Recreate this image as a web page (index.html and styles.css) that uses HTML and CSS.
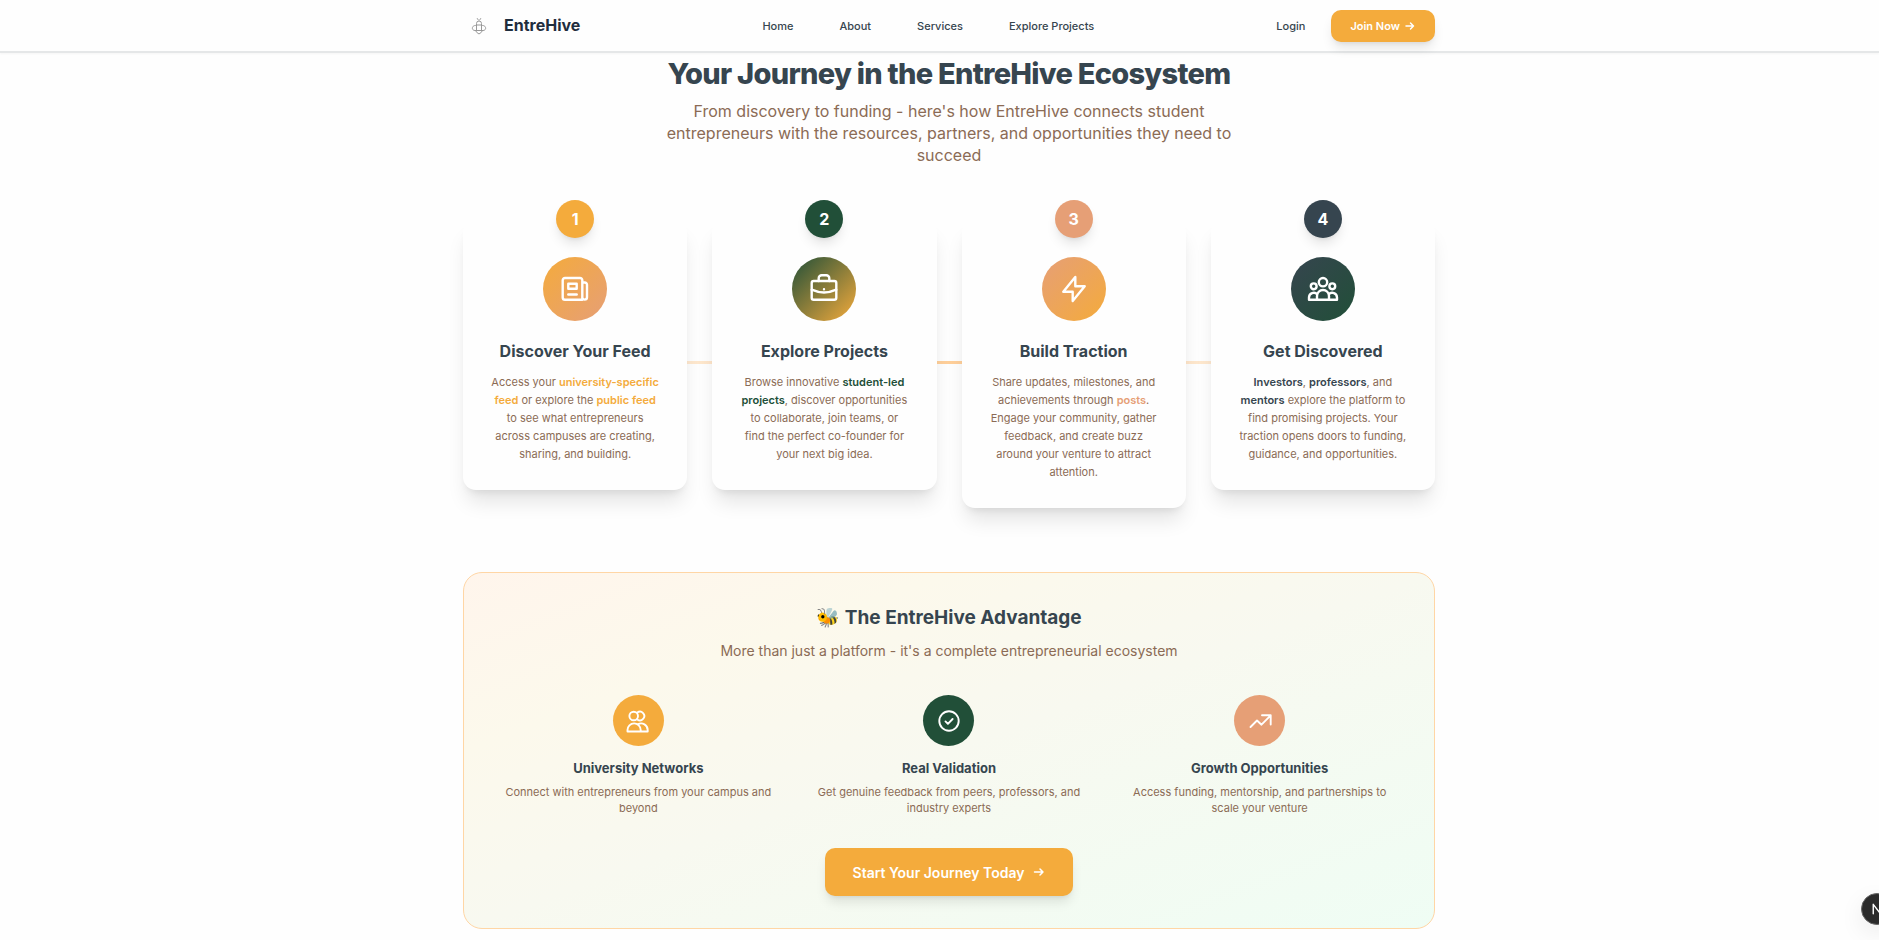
FILE: index.html
```html
<!DOCTYPE html>
<html lang="en">
<head>
    <meta charset="UTF-8">
    <meta name="viewport" content="width=device-width, initial-scale=1.0">
    <title>EntreHive</title>
    <link rel="stylesheet" href="styles.css">
</head>
<body>
    <header class="site-header">
        <div class="container header-inner">
            <a href="#" class="brand">
                <svg class="brand-logo" viewBox="0 0 32 32" aria-hidden="true">
                    <path d="M14.300 8.500l1 1.500M17.700 8.500l-1 1.500"/>
                    <path d="M13.500 20v-6.500a2.500 2.500 0 0 1 5 0V20M13.500 15h5"/>
                    <path d="M13.500 15.500c-5-1-5.500 5-1.500 5h8c4 0 3.500-6-1.500-5"/>
                    <path d="M12.500 20.500q.5 2 3.500 3.500 3-1.500 3.500-3.500"/>
                </svg>
                <span class="brand-name">EntreHive</span>
            </a>
            <nav class="main-nav">
                <a href="#">Home</a>
                <a href="#">About</a>
                <a href="#">Services</a>
                <a href="#">Explore Projects</a>
            </nav>
            <div class="header-actions">
                <a href="#" class="login">Login</a>
                <button type="button" class="btn btn-small">
                    Join Now
                    <svg class="arrow" viewBox="0 0 12 12" aria-hidden="true"><path d="M2 6h7.500M6.500 3l3 3-3 3"/></svg>
                </button>
            </div>
        </div>
    </header>

    <main class="page">
        <div class="container">
            <section class="intro">
                <h1>Your Journey in the EntreHive Ecosystem</h1>
                <p>From discovery to funding - here's how EntreHive connects student entrepreneurs with the resources, partners, and opportunities they need to succeed</p>
            </section>

            <section class="steps">
                <article class="step">
                    <span class="step-number honey">1</span>
                    <div class="step-icon honey-peach">
                        <svg viewBox="0 0 32 32" aria-hidden="true">
                            <path d="M23.300 26.700H6a2.300 2.300 0 0 1-2.300-2.300V7.300A2.300 2.300 0 0 1 6 5h15a2.300 2.300 0 0 1 2.300 2.300zM23.300 9.500h2.400A2.300 2.300 0 0 1 28 11.800v12.500a2.350 2.350 0 0 1-4.700 0"/>
                            <rect x="9.300" y="10.700" width="8.400" height="5"/>
                            <path d="M9.300 21.500h8.400"/>
                        </svg>
                    </div>
                    <h2>Discover Your Feed</h2>
                    <p>Access your <strong class="text-honey">university-specific feed</strong> or explore the <strong class="text-honey">public feed</strong> to see what entrepreneurs across campuses are creating, sharing, and building.</p>
                </article>
                <article class="step">
                    <span class="step-number forest">2</span>
                    <div class="step-icon forest-honey">
                        <svg viewBox="0 0 32 32" aria-hidden="true">
                            <rect x="3.700" y="8" width="24.600" height="18.700" rx="2"/>
                            <path d="M10.700 8V5.300a3 3 0 0 1 3-3h4.600a3 3 0 0 1 3 3V8M3.700 16.700q12.300 5.600 24.600 0M16 16.200v.1"/>
                        </svg>
                    </div>
                    <h2>Explore Projects</h2>
                    <p>Browse innovative <strong class="text-forest">student-led projects</strong>, discover opportunities to collaborate, join teams, or find the perfect co-founder for your next big idea.</p>
                </article>
                <article class="step">
                    <span class="step-number peach">3</span>
                    <div class="step-icon peach-honey">
                        <svg viewBox="0 0 32 32" aria-hidden="true">
                            <path d="M5.300 18.700L17.300 4v9.300h9.400L14.700 28v-9.300z"/>
                        </svg>
                    </div>
                    <h2>Build Traction</h2>
                    <p>Share updates, milestones, and achievements through <strong class="text-peach">posts</strong>. Engage your community, gather feedback, and create buzz around your venture to attract attention.</p>
                </article>
                <article class="step">
                    <span class="step-number slate">4</span>
                    <div class="step-icon slate-forest">
                        <svg viewBox="0 0 32 32" aria-hidden="true">
                            <circle cx="16" cy="9.200" r="4.200"/>
                            <circle cx="6.700" cy="13.300" r="2.900"/>
                            <circle cx="25.300" cy="13.300" r="2.900"/>
                            <path d="M10 26.800V23a6 6 0 0 1 12 0v3.800zM10 26.800H2V24.500a4.700 4.700 0 0 1 8.300-3M22 26.800h8V24.500a4.700 4.700 0 0 0-8.300-3"/>
                        </svg>
                    </div>
                    <h2>Get Discovered</h2>
                    <p><strong class="text-slate">Investors</strong>, <strong class="text-slate">professors</strong>, and <strong class="text-slate">mentors</strong> explore the platform to find promising projects. Your traction opens doors to funding, guidance, and opportunities.</p>
                </article>
            </section>

            <section class="advantage">
                <h2>🐝 The EntreHive Advantage</h2>
                <p class="advantage-lead">More than just a platform - it's a complete entrepreneurial ecosystem</p>
                <div class="benefits">
                    <div class="benefit">
                        <div class="benefit-icon honey">
                            <svg viewBox="0 0 26 26" aria-hidden="true">
                                <circle cx="8.700" cy="8" r="4.300"/>
                                <path d="M12.300 4.600a4.300 4.300 0 1 1 0 6.800M2.500 23.500V22a6.600 6.600 0 0 1 13.200 0v1.500zM15.700 23.500h7V22a6.600 6.600 0 0 0-9.700-5.800"/>
                            </svg>
                        </div>
                        <h3>University Networks</h3>
                        <p>Connect with entrepreneurs from your campus and beyond</p>
                    </div>
                    <div class="benefit">
                        <div class="benefit-icon forest">
                            <svg viewBox="0 0 26 26" aria-hidden="true">
                                <circle cx="13" cy="13" r="9.700"/>
                                <path d="M9.500 13.400l2.400 2.400 4.700-4.800"/>
                            </svg>
                        </div>
                        <h3>Real Validation</h3>
                        <p>Get genuine feedback from peers, professors, and industry experts</p>
                    </div>
                    <div class="benefit">
                        <div class="benefit-icon peach">
                            <svg viewBox="0 0 26 26" aria-hidden="true">
                                <path d="M3.500 19l6.500-6.500 4.500 4.200 9-9M15 7.300h8.700v9.200"/>
                            </svg>
                        </div>
                        <h3>Growth Opportunities</h3>
                        <p>Access funding, mentorship, and partnerships to scale your venture</p>
                    </div>
                </div>
                <button type="button" class="btn btn-large">
                    Start Your Journey Today
                    <svg class="arrow" viewBox="0 0 12 12" aria-hidden="true"><path d="M1.500 6h8.500M7 3l3 3-3 3"/></svg>
                </button>
            </section>
        </div>
    </main>

    <button type="button" class="dev-badge" aria-label="Open developer tools">
        <svg viewBox="0 0 32 32" aria-hidden="true"><path d="M12 21V11l10 13M21 11v7"/></svg>
    </button>
</body>
</html>
```
FILE: styles.css
```css
* {
    box-sizing: border-box;
}
body {
    margin: 0;
    background: #fefefe;
    color: #36454f;
    font-family: Inter, "Liberation Sans", sans-serif;
    font-size: 11px;
}
h1, h2, h3, p {
    margin: 0;
}
a {
    color: inherit;
    text-decoration: none;
}
svg {
    fill: none;
    stroke: currentColor;
    stroke-width: 2;
    stroke-linecap: round;
    stroke-linejoin: round;
}
.site-header,
.page {
    padding-left: 19px;
}
.container {
    max-width: 972px;
    margin: 0 auto;
}

/* Header */
.site-header {
    position: sticky;
    top: 0;
    z-index: 10;
    background: #fefefe;
    border-bottom: 2px solid #e5e7e8;
    box-shadow: 0 1px 2px rgba(0, 0, 0, 0.04);
}
.header-inner {
    display: flex;
    align-items: center;
    justify-content: space-between;
    height: 51px;
}
.brand {
    display: flex;
    align-items: center;
    gap: 9px;
}
.brand-logo {
    width: 32px;
    height: 32px;
    stroke: #999;
    stroke-width: 1;
}
.brand-name {
    color: #1f2d3d;
    font-size: 16px;
    line-height: 20px;
    padding-bottom: 1px;
    font-weight: 700;
}
.main-nav {
    display: flex;
    gap: 46px;
    font-weight: 500;
}
.header-actions {
    display: flex;
    align-items: center;
    gap: 26px;
    font-weight: 500;
}

/* Buttons */
.btn {
    display: inline-flex;
    align-items: center;
    justify-content: center;
    border: 0;
    background: #f4ab3c;
    color: #fff;
    font-family: inherit;
    font-weight: 600;
    cursor: pointer;
    box-shadow: 0 8px 12px -2px rgba(0, 0, 0, 0.1), 0 3px 5px -3px rgba(0, 0, 0, 0.1);
}
.btn-small {
    gap: 4px;
    height: 32px;
    padding: 0 19px;
    border-radius: 10px;
    font-size: 11px;
}
.btn-large {
    gap: 9px;
    height: 48px;
    padding: 0 28px;
    border-radius: 10px;
    font-size: 14px;
}
.arrow {
    width: 12px;
    height: 12px;
    stroke-width: 1.5;
}

/* Intro */
.intro {
    padding-top: 5px;
    text-align: center;
}
.intro h1 {
    font-size: 29px;
    line-height: 32px;
    font-weight: 800;
    letter-spacing: -0.025em;
}
.intro p {
    max-width: 576px;
    margin: 10px auto 0;
    color: #8b6b55;
    font-size: 16px;
    line-height: 22px;
}

/* Steps */
.steps {
    position: relative;
    display: grid;
    grid-template-columns: repeat(4, 1fr);
    align-items: start;
    gap: 25px;
    margin-top: 53px;
}
.steps::before {
    content: "";
    position: absolute;
    top: 142px;
    left: 0;
    right: 0;
    height: 3px;
    background: linear-gradient(to right, transparent, #ffcf99, transparent);
}
.step {
    position: relative;
    display: flex;
    flex-direction: column;
    align-items: center;
    padding: 38px 26px 27px;
    border-radius: 13px;
    background: #fefefe;
    box-shadow: 0 16px 20px -4px rgba(0, 0, 0, 0.1), 0 6px 8px -5px rgba(0, 0, 0, 0.1);
    text-align: center;
}
.step-number {
    position: absolute;
    top: -19px;
    left: 50%;
    width: 38px;
    margin-left: -19px;
    border-radius: 50%;
    color: #fff;
    font-size: 16px;
    line-height: 38px;
    font-weight: 700;
    box-shadow: 0 8px 12px -2px rgba(0, 0, 0, 0.1), 0 3px 5px -3px rgba(0, 0, 0, 0.1);
}
.step-icon {
    display: flex;
    align-items: center;
    justify-content: center;
    width: 64px;
    height: 64px;
    border-radius: 50%;
    color: #fff;
}
.step-icon svg {
    width: 32px;
    height: 32px;
    stroke-width: 2.4;
}
.step h2 {
    margin-top: 19px;
    font-size: 16px;
    line-height: 22px;
    font-weight: 700;
}
.step p {
    margin-top: 11px;
    padding: 0 2px;
    color: #8b6b55;
    line-height: 18px;
}
.step strong {
    font-weight: 600;
}

/* Palette */
.honey { background: #f4ab3c; }
.forest { background: #214f38; }
.peach { background: #e69f76; }
.slate { background: #36454f; }
.honey-peach { background: linear-gradient(135deg, #f4ab3c, #e69f76); }
.forest-honey { background: linear-gradient(135deg, #214f38, #f4ab3c); }
.peach-honey { background: linear-gradient(135deg, #e69f76, #f4ab3c); }
.slate-forest { background: linear-gradient(135deg, #36454f, #214f38); }
.step .text-honey { color: #f4ab3c; }
.step .text-forest { color: #214f38; }
.step .text-peach { color: #e69f76; }
.step .text-slate { color: #36454f; }

/* Advantage */
.advantage {
    margin: 64px 0 11px;
    padding: 32px;
    border: 1px solid #ffd6a5;
    border-radius: 19px;
    background: linear-gradient(to bottom right, #fff5ec, #fcf9ec 25%, #f8f9f0 50%, #effdf4);
    text-align: center;
}
.advantage h2 {
    font-size: 19px;
    line-height: 26px;
    font-weight: 700;
}
.advantage-lead {
    margin-top: 9px;
    color: #8b6b55;
    font-size: 14px;
    line-height: 22px;
}
.benefits {
    display: grid;
    grid-template-columns: repeat(3, 1fr);
    gap: 26px;
    margin: 33px 0 32px;
}
.benefit {
    display: flex;
    flex-direction: column;
    align-items: center;
}
.benefit-icon {
    display: flex;
    align-items: center;
    justify-content: center;
    width: 51px;
    height: 51px;
    border-radius: 50%;
    color: #fff;
}
.benefit-icon svg {
    width: 26px;
    height: 26px;
    stroke-width: 1.9;
}
.benefit h3 {
    margin-top: 13px;
    font-size: 13px;
    line-height: 19px;
    font-weight: 700;
}
.benefit p {
    margin-top: 6px;
    padding: 0 4px;
    color: #8b6b55;
    line-height: 16px;
}

/* Floating dev badge, half off the edge */
.dev-badge {
    position: fixed;
    right: -14px;
    bottom: 15px;
    width: 32px;
    height: 32px;
    padding: 0;
    border: 1px solid #666;
    border-radius: 50%;
    background: #2b2b2b;
    color: #fff;
    box-shadow: 0 8px 24px rgba(0, 0, 0, 0.08);
}
.dev-badge svg {
    display: block;
    width: 30px;
    height: 30px;
    stroke-width: 1.5;
}
```
